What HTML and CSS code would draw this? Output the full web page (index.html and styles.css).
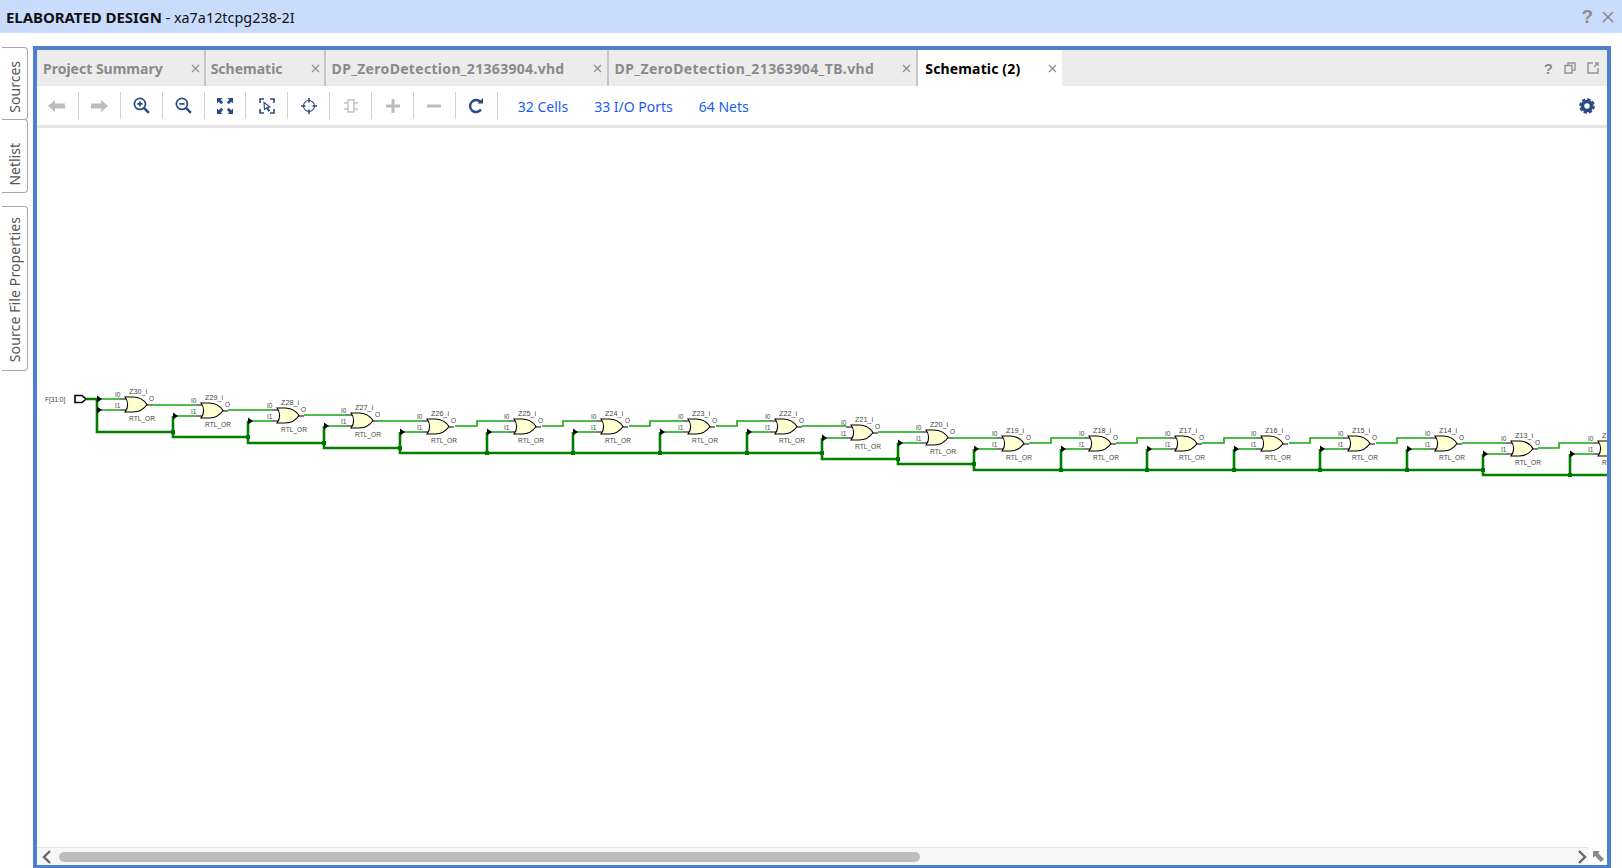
FILE: index.html
```html
<!DOCTYPE html>
<html lang="en">
<head>
<meta charset="utf-8">
<title>Elaborated Design</title>
<link rel="stylesheet" href="styles.css">
</head>
<body>
<header class="titlebar">
  <div class="title"><b>ELABORATED DESIGN</b> - xa7a12tcpg238-2I</div>
  <div class="title-actions">
    <span class="help">?</span>
    <svg class="ico-close" width="12" height="12" viewBox="0 0 12 12"><path d="M1 1 11 11M11 1 1 11"/></svg>
  </div>
</header>
<div class="workspace">
  <nav class="side">
    <div class="side-tab st-sources"><span>Sources</span></div>
    <div class="side-tab st-netlist"><span>Netlist</span></div>
    <div class="side-tab st-props"><span>Source File Properties</span></div>
  </nav>
  <main class="panel">
    <div class="tabs">
      <div class="tab short"><span>Project Summary</span><svg class="x" width="9" height="9" viewBox="0 0 9 9"><path d="M1 1 8 8M8 1 1 8"/></svg></div>
      <div class="tab short"><span>Schematic</span><svg class="x" width="9" height="9" viewBox="0 0 9 9"><path d="M1 1 8 8M8 1 1 8"/></svg></div>
      <div class="tab long"><span>DP_ZeroDetection_21363904.vhd</span><svg class="x" width="9" height="9" viewBox="0 0 9 9"><path d="M1 1 8 8M8 1 1 8"/></svg></div>
      <div class="tab long tb"><span>DP_ZeroDetection_21363904_TB.vhd</span><svg class="x" width="9" height="9" viewBox="0 0 9 9"><path d="M1 1 8 8M8 1 1 8"/></svg></div>
      <div class="tab active"><span>Schematic (2)</span><svg class="x" width="9" height="9" viewBox="0 0 9 9"><path d="M1 1 8 8M8 1 1 8"/></svg></div>
      <div class="tab-tools">
        <span class="help small">?</span>
        <svg class="tool-ico" width="12" height="12" viewBox="0 0 12 12"><path d="M4 3V1H11V8H8.500M1 3.500H8V11H1Z"/></svg>
        <svg class="tool-ico" width="12" height="12" viewBox="0 0 12 12"><path d="M6 1H1V11H11V6M7 5 11 1M8 1H11V4"/></svg>
      </div>
    </div>
    <div class="toolbar">
      <div class="btn"><svg width="18" height="14" viewBox="0 0 18 14"><path class="off" d="M0 7 7 1V4.500H17V9.500H7V13Z"/></svg></div>
      <div class="btn"><svg width="18" height="14" viewBox="0 0 18 14"><path class="off" d="M18 7 11 1V4.500H1V9.500H11V13Z"/></svg></div>
      <div class="btn"><svg width="17" height="17" viewBox="0 0 16 16"><circle class="ln" cx="6.500" cy="6.500" r="5.200"/><path class="ln" d="M4 6.500H9M6.500 4V9"/><path class="ln thick" d="M10.500 10.500 15 15"/></svg></div>
      <div class="btn"><svg width="17" height="17" viewBox="0 0 16 16"><circle class="ln" cx="6.500" cy="6.500" r="5.200"/><path class="ln" d="M4 6.500H9"/><path class="ln thick" d="M10.500 10.500 15 15"/></svg></div>
      <div class="btn"><svg width="16" height="16" viewBox="0 0 16 16"><path class="on" d="M0 0H5.500L3.800 1.700 6.200 4.200 4.200 6.200 1.700 3.800 0 5.500ZM16 0V5.500L14.300 3.800 11.800 6.200 9.800 4.200 12.300 1.700 10.500 0ZM0 16V10.500L1.700 12.200 4.200 9.800 6.200 11.800 3.800 14.300 5.500 16ZM16 16H10.500L12.200 14.300 9.800 11.800 11.800 9.800 14.300 12.300 16 10.500Z"/></svg></div>
      <div class="btn"><svg width="16" height="16" viewBox="0 0 16 16"><path class="ln" d="M1 5V1H5M11 1H15V5M15 11V15H11M5 15H1V11"/><path class="ln slim" d="M5 4.500 11 9 8.500 9.500 10.500 12.500 9.500 13 7.500 10 5.500 11.500Z"/></svg></div>
      <div class="btn"><svg width="16" height="16" viewBox="0 0 16 16"><circle class="ln slim" cx="8" cy="8" r="5.500"/><path class="ln" d="M8 0V4.500M8 11.500V16M0 8H4.500M11.500 8H16"/></svg></div>
      <div class="btn"><svg width="16" height="16" viewBox="0 0 16 16"><path class="ln-off" d="M5 2H11V14H5ZM1 5H5M1 11H5M11 5H15M11 11H15"/></svg></div>
      <div class="btn"><svg width="16" height="16" viewBox="0 0 16 16"><path class="off" d="M6.500 1H9.500V6.500H15V9.500H9.500V15H6.500V9.500H1V6.500H6.500Z"/></svg></div>
      <div class="btn"><svg width="16" height="16" viewBox="0 0 16 16"><path class="off" d="M1 6.500H15V9.500H1Z"/></svg></div>
      <div class="btn"><svg width="16" height="16" viewBox="0 0 16 16"><path class="ln thick" d="M13 11.500A6 6 0 1 1 12.500 4"/><path class="on" d="M9.500 5.500H15V0Z"/></svg></div>
      <a class="stat first">32 Cells</a>
      <a class="stat">33 I/O Ports</a>
      <a class="stat">64 Nets</a>
      <svg class="gear" width="16" height="16" viewBox="0 0 16 16"><circle class="gear-ring" cx="8" cy="8" r="4.500"/><circle class="gear-teeth" cx="8" cy="8" r="6.800"/></svg>
    </div>
    <div class="canvas">
      <svg class="schematic" width="1570" height="719" viewBox="37 128 1570 719">
        <defs>
          <g id="gate">
            <path class="stub" d="M-5 2H3M-5 13H3M21 8H27"/>
            <path class="or" d="M0 0H8C14 0 19 3 22 7.500 19 12 14 15 8 15H0C3.500 10.500 3.500 4.500 0 0Z"/>
            <text class="pin" x="-10" y="0">I0</text>
            <text class="pin" x="-10" y="11">I1</text>
            <text class="pin" x="24" y="4">O</text>
            <text class="cell" x="4" y="23.500">RTL_OR</text>
          </g>
          <path id="tri" d="M0 -3.500 5 0 0 3.500Z"/>
        </defs>

        <text class="pin port-label" x="45" y="402">F[31:0]</text>
        <path class="port" d="M75 395.500H82L86 399 82 402.500H75Z"/>

        <path class="net" d="M152 405H196M228 410H272M304 415H346M378 421H422M455 426H477V421H509M542 426H563V421H596M629 426H650V421H683M716 426H737V421H770M802 426H846M878 432H921M953 438H997M1029 443H1051V438H1084M1116 443H1137V438H1170M1202 443H1224V438H1256M1289 443H1310V438H1343M1376 443H1397V438H1430M1462 443H1506M1538 448H1559V443H1593"/>
        <path class="net" d="M97 399H120M97 410H120M173 416H196M248 421H272M324 426H346M400 432H422M487 432H509M573 432H596M660 432H683M747 432H770M822 438H846M898 443H921M974 449H997M1061 449H1084M1147 449H1170M1234 449H1256M1320 449H1343M1407 449H1430M1483 454H1506M1570 454H1593"/>

        <path class="bus" d="M86 399H97V432H173V437H248V443H324V448H400V453H822V459H898V464H974V470H1483V475H1607"/>
        <path class="bus" d="M173 416V432M248 421V437M324 426V443M400 432V448M487 432V453M573 432V453M660 432V453M747 432V453M822 438V453M898 443V459M974 449V464M1061 449V470M1147 449V470M1234 449V470M1320 449V470M1407 449V470M1483 454V470M1570 454V475"/>

        <path class="dots" d="M171 430h4v4h-4ZM246 435h4v4h-4ZM322 441h4v4h-4ZM398 446h4v4h-4ZM485 451h4v4h-4ZM571 451h4v4h-4ZM658 451h4v4h-4ZM745 451h4v4h-4ZM820 451h4v4h-4ZM896 457h4v4h-4ZM972 462h4v4h-4ZM1059 468h4v4h-4ZM1145 468h4v4h-4ZM1232 468h4v4h-4ZM1318 468h4v4h-4ZM1405 468h4v4h-4ZM1481 468h4v4h-4ZM1568 473h4v4h-4Z"/>

        <use href="#tri" x="97" y="399"/><use href="#tri" x="97" y="410"/>
        <use href="#tri" x="173" y="416"/><use href="#tri" x="248" y="421"/>
        <use href="#tri" x="324" y="426"/><use href="#tri" x="400" y="432"/>
        <use href="#tri" x="487" y="432"/><use href="#tri" x="573" y="432"/>
        <use href="#tri" x="660" y="432"/><use href="#tri" x="747" y="432"/>
        <use href="#tri" x="822" y="438"/><use href="#tri" x="898" y="443"/>
        <use href="#tri" x="974" y="449"/><use href="#tri" x="1061" y="449"/>
        <use href="#tri" x="1147" y="449"/><use href="#tri" x="1234" y="449"/>
        <use href="#tri" x="1320" y="449"/><use href="#tri" x="1407" y="449"/>
        <use href="#tri" x="1483" y="454"/><use href="#tri" x="1570" y="454"/>

        <g transform="translate(125 397)"><use href="#gate"/><text class="name" x="4" y="-3.500">Z30_i</text></g>
        <g transform="translate(201 403)"><use href="#gate"/><text class="name" x="4" y="-3.500">Z29_i</text></g>
        <g transform="translate(277 408)"><use href="#gate"/><text class="name" x="4" y="-3.500">Z28_i</text></g>
        <g transform="translate(351 413)"><use href="#gate"/><text class="name" x="4" y="-3.500">Z27_i</text></g>
        <g transform="translate(427 419)"><use href="#gate"/><text class="name" x="4" y="-3.500">Z26_i</text></g>
        <g transform="translate(514 419)"><use href="#gate"/><text class="name" x="4" y="-3.500">Z25_i</text></g>
        <g transform="translate(601 419)"><use href="#gate"/><text class="name" x="4" y="-3.500">Z24_i</text></g>
        <g transform="translate(688 419)"><use href="#gate"/><text class="name" x="4" y="-3.500">Z23_i</text></g>
        <g transform="translate(775 419)"><use href="#gate"/><text class="name" x="4" y="-3.500">Z22_i</text></g>
        <g transform="translate(851 425)"><use href="#gate"/><text class="name" x="4" y="-3.500">Z21_i</text></g>
        <g transform="translate(926 430)"><use href="#gate"/><text class="name" x="4" y="-3.500">Z20_i</text></g>
        <g transform="translate(1002 436)"><use href="#gate"/><text class="name" x="4" y="-3.500">Z19_i</text></g>
        <g transform="translate(1089 436)"><use href="#gate"/><text class="name" x="4" y="-3.500">Z18_i</text></g>
        <g transform="translate(1175 436)"><use href="#gate"/><text class="name" x="4" y="-3.500">Z17_i</text></g>
        <g transform="translate(1261 436)"><use href="#gate"/><text class="name" x="4" y="-3.500">Z16_i</text></g>
        <g transform="translate(1348 436)"><use href="#gate"/><text class="name" x="4" y="-3.500">Z15_i</text></g>
        <g transform="translate(1435 436)"><use href="#gate"/><text class="name" x="4" y="-3.500">Z14_i</text></g>
        <g transform="translate(1511 441)"><use href="#gate"/><text class="name" x="4" y="-3.500">Z13_i</text></g>
        <g transform="translate(1598 441)"><use href="#gate"/><text class="name" x="4" y="-3.500">Z12_i</text></g>
      </svg>
    </div>
    <div class="hscroll">
      <svg class="arrow a-left" width="10" height="14" viewBox="0 0 10 14"><path d="M8 1 2 7 8 13"/></svg>
      <div class="track"><div class="thumb"></div></div>
      <svg class="arrow a-right" width="10" height="14" viewBox="0 0 10 14"><path d="M2 1 8 7 2 13"/></svg>
      <div class="corner"><svg width="11" height="11" viewBox="0 0 11 11"><path d="M0 0H7L5 2 11 8 8 11 2 5 0 7Z"/></svg></div>
    </div>
  </main>
</div>
</body>
</html>
```
FILE: styles.css
```css
* { box-sizing: border-box; }
html, body { margin: 0; height: 100%; }
body {
  display: flex;
  flex-direction: column;
  height: 868px;
  overflow: hidden;
  background: #fff;
  font-family: "Noto Sans", "Open Sans", sans-serif;
  color: #000;
}
.titlebar {
  flex: none;
  height: 33px;
  background: #c9dcfc;
  display: flex;
  align-items: center;
  justify-content: space-between;
  padding: 0 8px 0 6px;
}
.title { font-size: 14.400px; color: #111; }
.title b { font-weight: 700; font-size: 15px; letter-spacing: -0.050px; }
.title-actions { display: flex; align-items: center; gap: 9px; }
.help { font-family: "Liberation Sans", sans-serif; font-weight: 700; font-size: 19px; color: #8c8c8c; line-height: 1; }
.help.small { font-size: 15px; }
.ico-close path { stroke: #8c8c8c; stroke-width: 1.6; fill: none; }

.workspace {
  flex: 1;
  min-height: 0;
  display: flex;
  padding: 13px 11px 0 2px;
}
.side {
  flex: none;
  width: 31px;
  display: flex;
  flex-direction: column;
  align-items: flex-start;
  padding-top: 1px;
}
.side-tab {
  width: 26px;
  border: 1px solid #a8a8a8;
  border-left: 0;
  border-radius: 0 4px 4px 0;
  display: flex;
  align-items: flex-end;
  justify-content: center;
  padding-bottom: 6px;
  background: #fff;
}
.side-tab span {
  writing-mode: vertical-rl;
  transform: rotate(180deg);
  font-size: 14px;
  line-height: 20px;
  color: #555;
  white-space: nowrap;
}
.st-sources { height: 73px; }
.st-netlist { height: 74px; margin-top: -1px; }
.st-props { height: 165px; margin-top: 13px; padding-bottom: 8px; }
.st-props span { letter-spacing: 0.120px; }

.panel {
  flex: 1;
  min-width: 0;
  border: 4px solid #4c7fce;
  border-bottom-width: 3px;
  display: flex;
  flex-direction: column;
  background: #fff;
}
.tabs {
  flex: none;
  height: 36px;
  background: #ececec;
  display: flex;
  align-items: stretch;
}
.tab {
  display: flex;
  align-items: center;
  gap: 28px;
  padding: 0 5px;
  border-right: 2px solid #c6c6c6;
  font-size: 14px;
  font-weight: 700;
  color: #8a8a8a;
  white-space: nowrap;
}
.tab.short { padding-right: 4px; }
.tab:first-child { padding-left: 6px; }
.tab.long { padding-left: 6px; }
.tab.long span { letter-spacing: 0.310px; }
.tab.long.tb span { letter-spacing: 0.400px; }
.tab.active { background: #fff; color: #000; border-right: 0; padding-left: 7px; }
.tab.active span { letter-spacing: 0.150px; }
.x path { stroke: #909090; stroke-width: 1.3; fill: none; }
.tab-tools {
  margin-left: auto;
  display: flex;
  align-items: center;
  gap: 11px;
  padding-right: 8px;
}
.tool-ico path { stroke: #929292; stroke-width: 1.4; fill: none; }

.toolbar {
  flex: none;
  height: 42px;
  border-bottom: 3px solid #e5e5e5;
  display: flex;
  align-items: center;
}
.btn {
  flex: none;
  width: 41.900px;
  height: 27px;
  display: flex;
  align-items: center;
  justify-content: center;
  border-right: 1px solid #d2d2d2;
}
.off { fill: #bcbcbc; }
.on { fill: #2a4b82; }
.ln { fill: none; stroke: #2a4b82; stroke-width: 1.6; }
.ln.thick { stroke-width: 2.4; }
.ln.slim { stroke-width: 1.1; }
.ln-off { fill: none; stroke: #c4c4c4; stroke-width: 1.5; }
.stat { font-size: 14px; color: #1a5cf0; white-space: nowrap; margin: 1px 0 0 26px; }
.stat.first { margin-left: 20px; }
.gear { margin-left: auto; margin-right: 12px; }
.gear-ring { fill: none; stroke: #2a4b82; stroke-width: 3.6; }
.gear-teeth { fill: none; stroke: #2a4b82; stroke-width: 2; stroke-dasharray: 3.34 2; }

.canvas { flex: 1; min-height: 0; overflow: hidden; }
.schematic { display: block; }
.schematic text { font-family: "Liberation Sans", sans-serif; fill: #444; }
.pin { font-size: 6.500px; }
.cell { font-size: 6.600px; }
.name { font-size: 7.200px; }
.or { fill: #ffffd2; stroke: #000; stroke-width: 1.100; }
.stub { stroke: #000; stroke-width: 1; fill: none; }
.port { fill: #fff; stroke: #000; stroke-width: 1.600; }
.net { fill: none; stroke: #12a812; stroke-width: 1.600; }
.bus { fill: none; stroke: #007f00; stroke-width: 2.600; }
.dots { fill: #007400; }

.hscroll {
  flex: none;
  height: 18px;
  display: flex;
  align-items: center;
  background: #f6f6f6;
  border-top: 1px solid #e4e4e4;
}
.arrow { flex: none; }
.a-left { margin: 0 7px 0 5px; }
.a-right { margin: 0 2px 0 5px; }
.arrow path { fill: none; stroke: #666; stroke-width: 2.400; }
.track { flex: 1; height: 10px; min-width: 0; }
.thumb { width: 861px; height: 10px; border-radius: 5px; background: #bdbdbd; }
.corner {
  flex: none;
  width: 18px;
  align-self: stretch;
  background: #fff;
  margin-top: -1px;
  display: flex;
  align-items: center;
  justify-content: center;
}
.corner path { fill: #8a8a8a; }
```
